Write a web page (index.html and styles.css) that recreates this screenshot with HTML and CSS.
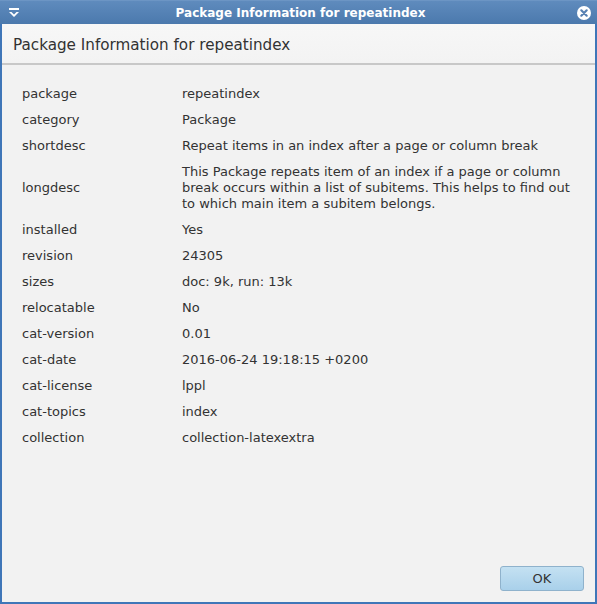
FILE: index.html
```html
<!DOCTYPE html>
<html>
<head>
<meta charset="utf-8">
<link rel="stylesheet" href="styles.css">
</head>
<body>
<div class="window">
  <div class="titlebar">
    <span class="menu-icon">
      <svg width="12" height="10" viewBox="0 0 12 10"><rect x="1" y="0" width="10" height="2" fill="#fff"/><path d="M1 4 L6 9 L11 4 L8.5 4 L6 6.5 L3.5 4 Z" fill="#fff"/></svg>
    </span>
    <span class="title">Package Information for repeatindex</span>
    <span class="close-icon">
      <svg width="14" height="14" viewBox="0 0 14 14"><circle cx="7" cy="7" r="7" fill="#fff"/><path d="M4.3 4.3 L9.7 9.7 M9.7 4.3 L4.3 9.7" stroke="#5781b2" stroke-width="2.2" stroke-linecap="round"/></svg>
    </span>
  </div>
  <div class="header">Package Information for repeatindex</div>
  <div class="content">
    <div class="grid">
      <div class="key">package</div><div class="val">repeatindex</div>
      <div class="key">category</div><div class="val">Package</div>
      <div class="key">shortdesc</div><div class="val">Repeat items in an index after a page or column break</div>
      <div class="key">longdesc</div><div class="val">This Package repeats item of an index if a page or column break occurs within a list of subitems. This helps to find out to which main item a subitem belongs.</div>
      <div class="key">installed</div><div class="val">Yes</div>
      <div class="key">revision</div><div class="val">24305</div>
      <div class="key">sizes</div><div class="val">doc: 9k, run: 13k</div>
      <div class="key">relocatable</div><div class="val">No</div>
      <div class="key">cat-version</div><div class="val">0.01</div>
      <div class="key">cat-date</div><div class="val">2016-06-24 19:18:15 +0200</div>
      <div class="key">cat-license</div><div class="val">lppl</div>
      <div class="key">cat-topics</div><div class="val">index</div>
      <div class="key">collection</div><div class="val">collection-latexextra</div>
    </div>
    <div class="footer">
      <button class="ok">OK</button>
    </div>
  </div>
</div>
</body>
</html>
```
FILE: styles.css
```css
html, body {
  margin: 0;
  padding: 0;
  width: 597px;
  height: 604px;
  overflow: hidden;
  font-family: "DejaVu Sans", sans-serif;
}
.window {
  width: 597px;
  height: 604px;
  box-sizing: border-box;
  border: 2px solid #3f76b8;
  border-top: none;
  background: #f2f2f2;
  display: flex;
  flex-direction: column;
}
.titlebar {
  height: 24px;
  margin: 0 -2px;
  background: linear-gradient(#5f8bbd, #4b79ad);
  border-top: 1px solid #6c95c4;
  box-sizing: border-box;
  display: flex;
  align-items: center;
  color: #fff;
  position: relative;
}
.menu-icon {
  width: 12px;
  height: 10px;
  margin-left: 8px;
  display: flex;
}
.title {
  flex: 1;
  text-align: center;
  font-weight: bold;
  font-size: 12px;
  padding-left: 4px;
}
.close-icon {
  width: 14px;
  height: 14px;
  margin-right: 6px;
  display: flex;
}
.header {
  height: 41px;
  box-sizing: border-box;
  background: linear-gradient(#f7f7f7, #f3f3f3);
  border-bottom: 2px solid #c8c8c8;
  padding: 3px 0 0 11px;
  display: flex;
  align-items: center;
  font-size: 15.2px;
  color: #323232;
}
.content {
  flex: 1;
  display: flex;
  flex-direction: column;
  padding: 16px 0 0 20px;
}
.grid {
  display: grid;
  grid-template-columns: 160px 400px;
  font-size: 13px;
  line-height: 16px;
  color: #333;
}
.key, .val {
  padding: 5px 0;
  display: flex;
  align-items: center;
}
.footer {
  margin-top: auto;
  display: flex;
  justify-content: flex-end;
  padding: 0 11px 11px 0;
}
.ok {
  width: 84px;
  height: 25px;
  border: 1px solid #8fb2cc;
  border-radius: 3px;
  background: linear-gradient(#c4e1f2, #a9d0ea);
  font-family: "DejaVu Sans", sans-serif;
  font-size: 13px;
  color: #333;
  padding: 0;
}
```
